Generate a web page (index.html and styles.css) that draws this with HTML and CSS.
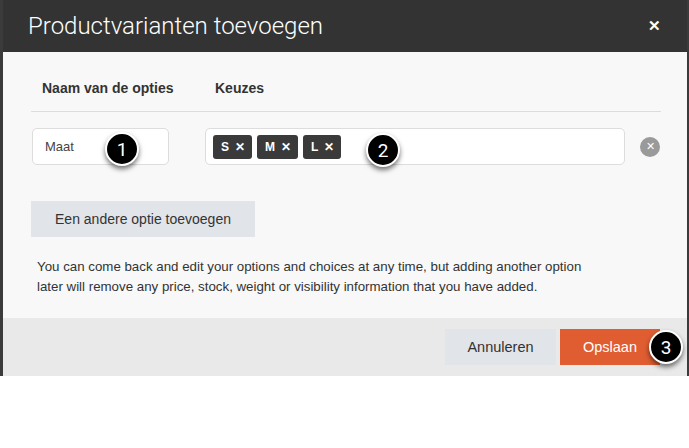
FILE: index.html
```html
<!DOCTYPE html>
<html lang="nl">
<head>
    <meta charset="UTF-8">
    <meta name="viewport" content="width=device-width, initial-scale=1.0">
    <title>Productvarianten toevoegen</title>
    <link rel="stylesheet" href="styles.css">
</head>
<body>
    <div class="screen">
        <div class="modal">
            <header class="modal-head">
                <h1 class="modal-title">Productvarianten toevoegen</h1>
                <span class="close">&#x2715;</span>
            </header>

            <main class="modal-body">
                <div class="cols">
                    <span class="col-name">Naam van de opties</span>
                    <span class="col-choices">Keuzes</span>
                </div>

                <div class="option-row">
                    <div class="name-field">
                        Maat
                        <span class="step step-1">1</span>
                    </div>
                    <div class="choices-field">
                        <span class="tag">S <b>&#x2715;</b></span>
                        <span class="tag">M <b>&#x2715;</b></span>
                        <span class="tag">L <b>&#x2715;</b></span>
                        <span class="step step-2">2</span>
                    </div>
                    <span class="remove">&#x2715;</span>
                </div>

                <button class="add-option">Een andere optie toevoegen</button>

                <p class="note">You can come back and edit your options and choices at any time, but adding another option later will remove any price, stock, weight or visibility information that you have added.</p>
            </main>

            <footer class="modal-foot">
                <button class="btn btn-cancel">Annuleren</button>
                <button class="btn btn-save">Opslaan<span class="step step-3">3</span></button>
            </footer>
        </div>
    </div>
</body>
</html>
```

FILE: styles.css
```css
body {
    margin: 0;
    background-color: #fff;
    font-family: "Liberation Sans", Arial, sans-serif;
    color: #333;
}

.screen {
    background-color: #3b3b3b;
    padding: 0 2px 0 3px;
}

.modal {
    background-color: #f8f8f8;
}

.modal-head {
    height: 52px;
    background-color: #333;
    display: flex;
    align-items: center;
    justify-content: space-between;
    padding: 0 26px 0 25px;
}

.modal-title {
    margin: 0;
    font-family: Roboto, "Liberation Sans", sans-serif;
    font-weight: 300;
    font-size: 24px;
    color: #fff;
}

.close {
    color: #fff;
    font-size: 15px;
    font-weight: bold;
}

.modal-body {
    padding: 0 26px 0 28px;
}

.cols {
    display: flex;
    padding: 28px 0 15px 11px;
    border-bottom: 1px solid #dcdcdc;
    font-size: 14px;
    font-weight: bold;
    line-height: 16px;
}

.col-name {
    width: 173px;
}

.option-row {
    display: flex;
    align-items: center;
    margin-top: 16px;
    padding-left: 1px;
}

.name-field {
    position: relative;
    width: 123px;
    height: 35px;
    padding-left: 12px;
    display: flex;
    align-items: center;
    background-color: #fff;
    border: 1px solid #ddd;
    border-radius: 5px;
    font-size: 13px;
    color: #444;
}

.choices-field {
    position: relative;
    width: 411px;
    height: 35px;
    margin-left: 36px;
    padding-left: 7px;
    display: flex;
    align-items: center;
    gap: 5px;
    background-color: #fff;
    border: 1px solid #ddd;
    border-radius: 5px;
}

.tag {
    height: 24px;
    padding: 0 7px 0 8px;
    display: flex;
    align-items: center;
    gap: 6px;
    background-color: #3a3a3a;
    border-radius: 3px;
    color: #fff;
    font-size: 12px;
    font-weight: bold;
}

.tag b {
    font-size: 12px;
}

.remove {
    width: 20px;
    height: 20px;
    margin-left: 15px;
    border-radius: 50%;
    background-color: #9a9a9a;
    color: #fff;
    font-size: 11px;
    display: flex;
    align-items: center;
    justify-content: center;
}

.step {
    position: absolute;
    width: 30px;
    height: 30px;
    border: 2px solid #fff;
    border-radius: 50%;
    background-color: #000;
    color: #fff;
    font-family: Roboto, "Liberation Sans", sans-serif;
    font-size: 19px;
    font-weight: 400;
    display: flex;
    align-items: center;
    justify-content: center;
    box-shadow: 0 3px 5px rgba(0, 0, 0, 0.55);
}

.step-1 {
    left: 72px;
    top: 3px;
}

.step-2 {
    left: 160px;
    top: 4px;
}

.step-3 {
    left: 89px;
    top: 1px;
}

.add-option {
    display: block;
    margin-top: 36px;
    width: 224px;
    height: 36px;
    border: none;
    background-color: #e1e4e8;
    color: #333;
    font-family: "Liberation Sans", Arial, sans-serif;
    font-size: 14px;
}

.note {
    margin: 20px 0 0;
    padding: 0 0 21px 6px;
    font-size: 13.3px;
    line-height: 20px;
    max-width: 570px;
}

.modal-foot {
    height: 58px;
    background-color: #e9e9e9;
    display: flex;
    align-items: center;
    justify-content: flex-end;
    gap: 4px;
    padding-right: 27px;
}

.btn {
    height: 36px;
    border: none;
    font-family: "Liberation Sans", Arial, sans-serif;
    font-size: 14.5px;
}

.btn-cancel {
    width: 111px;
    background-color: #e1e4e8;
    color: #333;
}

.btn-save {
    position: relative;
    width: 100px;
    background-color: #e05d31;
    color: #fff;
}
```
